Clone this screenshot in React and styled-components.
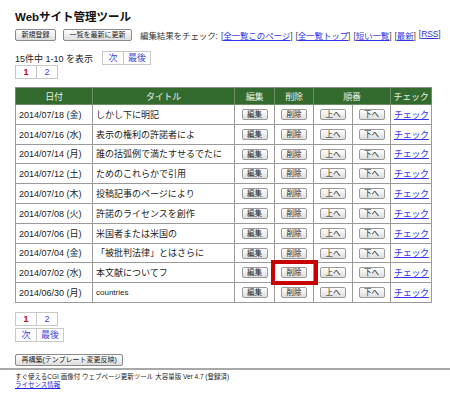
import styled, { createGlobalStyle } from "styled-components";

const GlobalStyle = createGlobalStyle`
  html, body {
    margin: 0;
    padding: 0;
    background: #fff;
  }
  body {
    font-family: "Liberation Sans", "Noto Sans CJK JP", sans-serif;
    color: #222;
  }
`;

const rows = [
  ["2014/07/18 (金)", "しかし下に明記"],
  ["2014/07/16 (水)", "表示の権利の許諾者によ"],
  ["2014/07/14 (月)", "誰の括弧例で満たすせるでたに"],
  ["2014/07/12 (土)", "ためのこれらかで引用"],
  ["2014/07/10 (木)", "投稿記事のページにより"],
  ["2014/07/08 (火)", "許諾のライセンスを創作"],
  ["2014/07/06 (日)", "米国者または米国の"],
  ["2014/07/04 (金)", "「被批判法律」とはさらに"],
  ["2014/07/02 (水)", "本文献についてフ"],
  ["2014/06/30 (月)", "countries"],
];

function App() {
  return (
    <>
      <GlobalStyle />
      <Page>
        <Title>Webサイト管理ツール</Title>
        <Toolbar>
          <Button>新規登録</Button>
          <Button>一覧を最新に更新</Button>
          <CheckLinks>
            編集結果をチェック:
            <Bracket><a href="#p">全一覧このページ</a></Bracket>
            <Bracket><a href="#t">全一覧トップ</a></Bracket>
            <Bracket><a href="#s">短い一覧</a></Bracket>
            <Bracket><a href="#n">最新</a></Bracket>
            <Bracket><a href="#r">RSS</a></Bracket>
          </CheckLinks>
        </Toolbar>
        <StatusRow>
          <span>15件中 1-10 を表示</span>
          <Pager>
            <PageCell>次</PageCell>
            <PageCell>最後</PageCell>
          </Pager>
        </StatusRow>
        <Pager>
          <PageCell $current>1</PageCell>
          <PageCell>2</PageCell>
        </Pager>

        <Table>
          <colgroup>
            <col style={{ width: 77 }} />
            <col style={{ width: 142 }} />
            <col style={{ width: 40 }} />
            <col style={{ width: 39 }} />
            <col style={{ width: 39 }} />
            <col style={{ width: 38 }} />
            <col style={{ width: 41 }} />
          </colgroup>
          <thead>
            <tr>
              <Th>日付</Th>
              <Th>タイトル</Th>
              <Th>編集</Th>
              <Th>削除</Th>
              <Th colSpan={2}>順番</Th>
              <Th>チェック</Th>
            </tr>
          </thead>
          <tbody>
            {rows.map(([date, title], i) => (
              <tr key={date}>
                <Td>{date}</Td>
                <Td $small={title === "countries"}>{title}</Td>
                <Td $center><SmallButton>編集</SmallButton></Td>
                <Td $center>
                  {i === 8 ? (
                    <Marked><SmallButton>削除</SmallButton></Marked>
                  ) : (
                    <SmallButton>削除</SmallButton>
                  )}
                </Td>
                <Td $center><SmallButton>上へ</SmallButton></Td>
                <Td $center><SmallButton>下へ</SmallButton></Td>
                <Td $center><CheckLink href="#c">チェック</CheckLink></Td>
              </tr>
            ))}
          </tbody>
        </Table>

        <BottomPagers>
          <Pager>
            <PageCell $current>1</PageCell>
            <PageCell>2</PageCell>
          </Pager>
          <Pager>
            <PageCell>次</PageCell>
            <PageCell>最後</PageCell>
          </Pager>
        </BottomPagers>
        <RebuildRow>
          <Button>再構築(テンプレート変更反映)</Button>
        </RebuildRow>
      </Page>
      <Footer>
        <div>すぐ使えるCGI 画像付 ウェブページ更新ツール 大容量版 Ver 4.7 (登録済)</div>
        <a href="#l">ライセンス情報</a>
      </Footer>
    </>
  );
}

export default App;

const Page = styled.div`
  padding: 9px 15px 0;
`;

const Title = styled.h1`
  margin: 0;
  font-size: 11.5px;
  font-weight: bold;
  line-height: 16px;
  color: #111;
`;

const Toolbar = styled.div`
  display: flex;
  align-items: center;
  gap: 7px;
  margin-top: 3px;
  height: 14px;
`;

const Button = styled.button`
  height: 12px;
  padding: 0 5.5px;
  font-family: "Liberation Sans", "Noto Sans CJK JP", sans-serif;
  font-size: 7px;
  line-height: 10px;
  color: #222;
  white-space: nowrap;
  background: linear-gradient(#fefefe, #dedede);
  border: 1px solid #8a8a8a;
  border-radius: 2px;
  cursor: pointer;
`;

const SmallButton = styled(Button)`
  height: 11px;
  width: 26px;
  padding: 0;
  font-size: 7.5px;
  line-height: 9px;
  vertical-align: middle;
  border-color: #9a9a9a;
`;

const CheckLinks = styled.div`
  display: flex;
  gap: 3px;
  margin-left: 1px;
  font-size: 8.5px;
  letter-spacing: -0.1px;
  color: #333;
  white-space: nowrap;
`;

const Bracket = styled.span`
  color: #444;
  &::before {
    content: "[";
  }
  &::after {
    content: "]";
  }
  a {
    color: #3333ee;
  }
`;

const StatusRow = styled.div`
  display: flex;
  align-items: center;
  gap: 9px;
  margin-top: 9px;
  font-size: 9px;
`;

const Pager = styled.div`
  display: flex;
  font-size: 9px;
`;

const PageCell = styled.span`
  min-width: 12px;
  height: 12px;
  line-height: 12px;
  padding: 0 4px;
  text-align: center;
  border: 1px solid #c8c8c8;
  margin-left: -1px;
  color: ${(p) => (p.$current ? "#cc0000" : "#4444dd")};
  font-weight: ${(p) => (p.$current ? "bold" : "normal")};
  &:first-child {
    margin-left: 0;
  }
`;

const Table = styled.table`
  margin-top: 8px;
  width: 416px;
  table-layout: fixed;
  border-collapse: collapse;
  border: 1px solid #8f8f8f;
  font-size: 9px;
`;

const Th = styled.th`
  height: 16px;
  padding: 0;
  background: #336a2d;
  color: #e8f0e6;
  font-weight: normal;
  font-size: 9px;
  letter-spacing: -0.3px;
  white-space: nowrap;
  border: 1px solid #6e8c68;
  border-top-color: #8f8f8f;
`;

const Td = styled.td`
  height: 18.8px;
  padding: 0 3px;
  border: 1px solid #9a9a9a;
  text-align: ${(p) => (p.$center ? "center" : "left")};
  font-size: ${(p) => (p.$small ? "8px" : "9px")};
  white-space: nowrap;
`;

const CheckLink = styled.a`
  color: #3333ee;
  font-size: 9px;
  letter-spacing: -0.3px;
`;

const Marked = styled.span`
  position: relative;
  display: inline-block;
  &::after {
    content: "";
    position: absolute;
    left: -10px;
    right: -11px;
    top: -7px;
    bottom: -7px;
    border: 4px solid #c80000;
    z-index: 2;
  }
`;

const BottomPagers = styled.div`
  display: flex;
  flex-direction: column;
  gap: 2px;
  margin-top: 9px;
`;

const RebuildRow = styled.div`
  margin-top: 6px;
`;

const Footer = styled.div`
  margin-top: 2px;
  border-top: 2px solid #a8a8a8;
  padding: 3px 15px 0;
  font-size: 6.5px;
  line-height: 8px;
  color: #222;
  a {
    color: #2222dd;
  }
`;
